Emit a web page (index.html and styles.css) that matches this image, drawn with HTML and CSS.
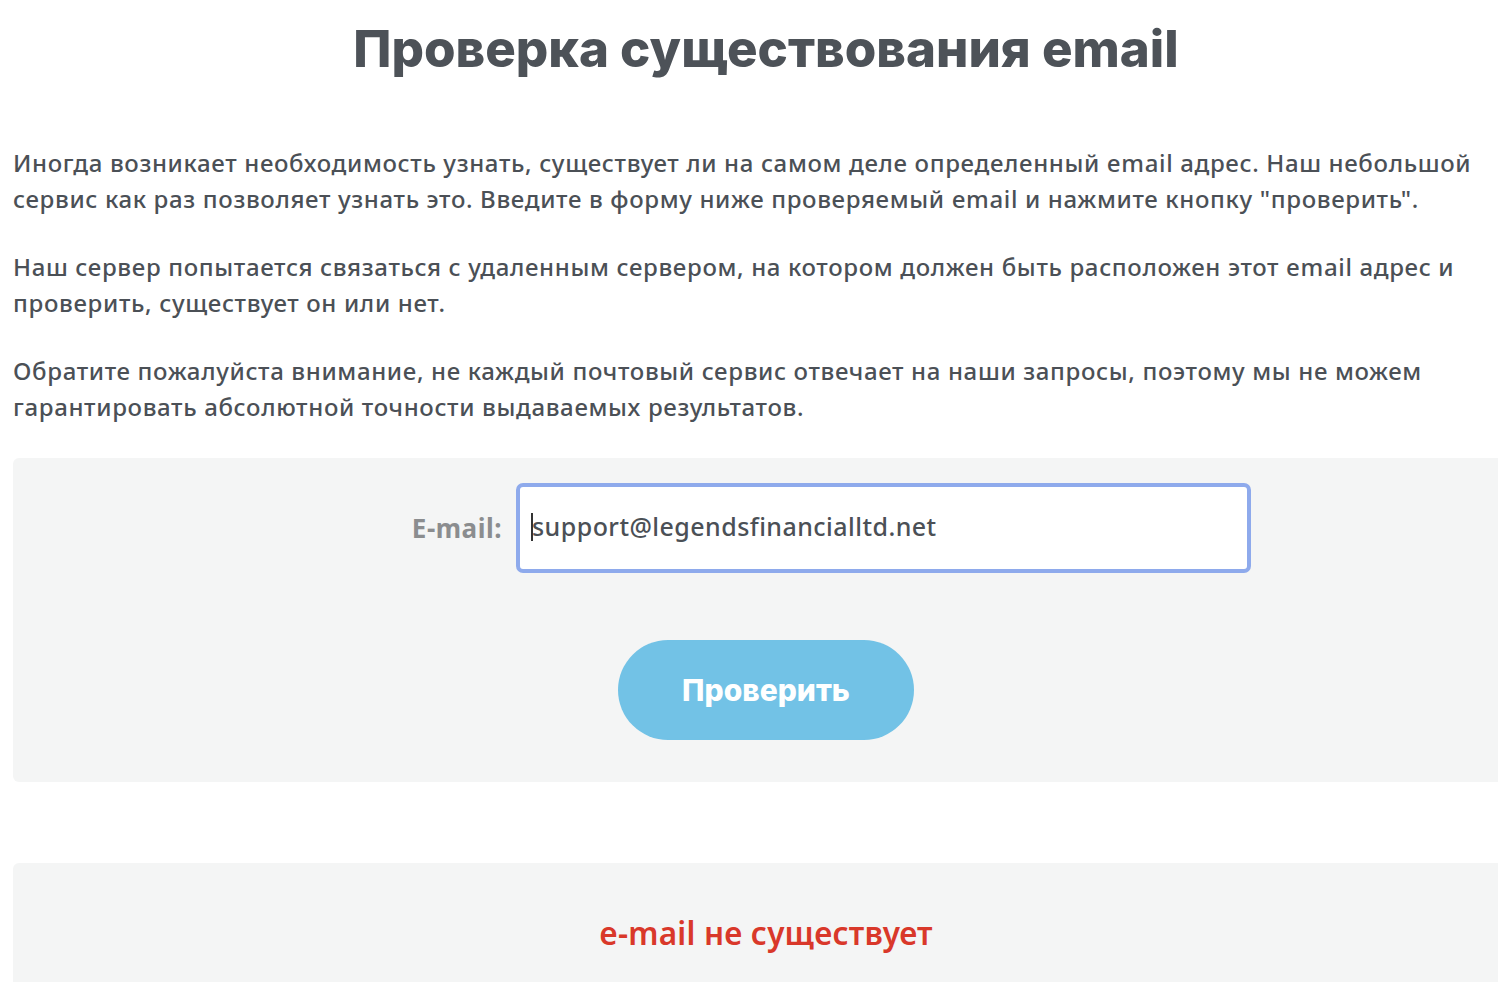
FILE: index.html
```html
<!DOCTYPE html>
<html>
<head>
  <meta charset="utf-8">
  <title>Проверка существования email</title>
  <link rel="stylesheet" href="styles.css">
</head>
<body>
  <div class="page">
    <h1 class="title">Проверка существования email</h1>

    <div class="intro">
      <p>Иногда возникает необходимость узнать, существует ли на самом деле определенный email адрес. Наш небольшой сервис как раз позволяет узнать это. Введите в форму ниже проверяемый email и нажмите кнопку "проверить".</p>
      <p>Наш сервер попытается связаться с удаленным сервером, на котором должен быть расположен этот email адрес и проверить, существует он или нет.</p>
      <p>Обратите пожалуйста внимание, не каждый почтовый сервис отвечает на наши запросы, поэтому мы не можем гарантировать абсолютной точности выдаваемых результатов.</p>
    </div>

    <form class="check-form">
      <div class="form-row">
        <label class="form-label" for="email">E-mail:</label>
        <div class="input-wrap">
          <span class="caret"></span>
          <input class="form-input" type="text" id="email" value="support@legendsfinancialltd.net">
        </div>
      </div>
      <div class="form-actions">
        <button type="button" class="btn-check">Проверить</button>
      </div>
    </form>

    <div class="result">
      <p class="result-text">e-mail не существует</p>
    </div>
  </div>
</body>
</html>
```

FILE: styles.css
```css
html, body {
  margin: 0;
  padding: 0;
  background: #ffffff;
  overflow: hidden;
}

body {
  font-family: 'Noto Sans', 'Open Sans', sans-serif;
  color: #4b5056;
}

.page {
  width: 1506px;
  margin-left: 13px;
}

.title {
  margin: 0;
  padding-top: 20px;
  height: 100px;
  box-sizing: border-box;
  text-align: center;
  font-family: 'Inter', 'Noto Sans', sans-serif;
  font-weight: 800;
  font-size: 51px;
  line-height: 58px;
  color: #4d5258;
}

.intro {
  padding-top: 45px;
  padding-bottom: 1px;
}

.intro p {
  margin: 0 0 32px;
  font-size: 24px;
  font-weight: 500;
  letter-spacing: 0.65px;
  line-height: 36px;
  width: 1480px;
}

.check-form {
  background: #f4f5f5;
  border-radius: 6px;
  padding: 25px 0 42px;
}

.form-row {
  display: flex;
  align-items: center;
}

.form-label {
  width: 503px;
  padding-right: 14px;
  box-sizing: border-box;
  text-align: right;
  font-size: 26px;
  font-weight: 700;
  letter-spacing: 0.5px;
  color: #8b8d8f;
}

.input-wrap {
  position: relative;
}

.form-input {
  display: block;
  width: 735px;
  height: 90px;
  box-sizing: border-box;
  border: 4px solid #8eaaec;
  border-radius: 7px;
  background: #ffffff;
  padding: 0 12px 4px;
  font-family: 'Noto Sans', 'Open Sans', sans-serif;
  font-size: 25px;
  font-weight: 500;
  letter-spacing: 0.45px;
  color: #4b5056;
  outline: none;
}

.caret {
  position: absolute;
  left: 15px;
  top: 30px;
  width: 2px;
  height: 28px;
  background: #333;
}

.form-actions {
  display: flex;
  justify-content: center;
  margin-top: 67px;
}

.btn-check {
  width: 296px;
  height: 100px;
  border: none;
  border-radius: 50px;
  background: #72c2e6;
  color: #ffffff;
  font-family: 'Inter', 'Noto Sans', sans-serif;
  font-weight: 800;
  font-size: 30px;
  cursor: pointer;
}

.result {
  margin-top: 81px;
  background: #f4f5f5;
  border-radius: 6px;
  height: 140px;
  padding-top: 48px;
  box-sizing: border-box;
}

.result-text {
  margin: 0;
  text-align: center;
  font-size: 31.5px;
  font-weight: 600;
  letter-spacing: 0.2px;
  color: #d9382a;
}
```
